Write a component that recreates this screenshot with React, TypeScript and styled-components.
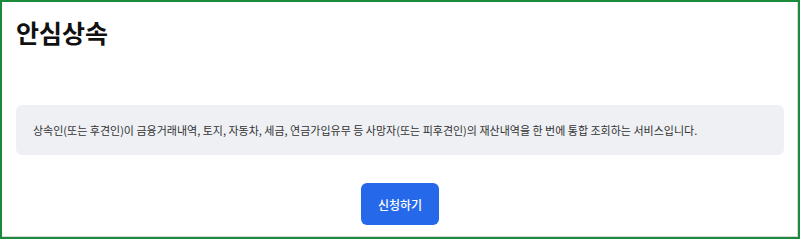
import React from "react";
import styled, { createGlobalStyle } from "styled-components";

const GlobalStyle = createGlobalStyle`
  html, body {
    margin: 0;
    padding: 0;
    background: #ffffff;
  }
  * {
    box-sizing: border-box;
  }
`;

const Frame = styled.div`
  width: 800px;
  height: 239px;
  border: 2px solid #1b8a3c;
  box-shadow: inset -1px -1px 0 #d9d9d9;
  padding: 0 14px;
  display: flex;
  flex-direction: column;
  font-family: "Noto Sans CJK KR", "Noto Sans", sans-serif;
`;

const Title = styled.h1`
  margin: 14px 0 0;
  font-size: 25px;
  line-height: 33px;
  font-weight: 700;
  color: #111111;
`;

const InfoBox = styled.div`
  margin-top: 56px;
  height: 50px;
  padding: 0 17px;
  display: flex;
  align-items: center;
  background: #eef0f4;
  border-radius: 6px;
  font-size: 11px;
  color: #333333;
`;

const Actions = styled.div`
  margin-top: 28px;
  display: flex;
  justify-content: center;
`;

const ApplyButton = styled.button`
  width: 78px;
  height: 42px;
  border: none;
  border-radius: 6px;
  background: #2569ea;
  color: #ffffff;
  font-family: inherit;
  font-size: 12px;
  font-weight: 500;
  cursor: pointer;
`;

const App: React.FC = () => {
  return (
    <>
      <GlobalStyle />
      <Frame>
        <Title>안심상속</Title>
        <InfoBox>
          상속인(또는 후견인)이 금융거래내역, 토지, 자동차, 세금, 연금가입유무 등 사망자(또는 피후견인)의 재산내역을 한 번에 통합 조회하는 서비스입니다.
        </InfoBox>
        <Actions>
          <ApplyButton>신청하기</ApplyButton>
        </Actions>
      </Frame>
    </>
  );
};

export default App;
